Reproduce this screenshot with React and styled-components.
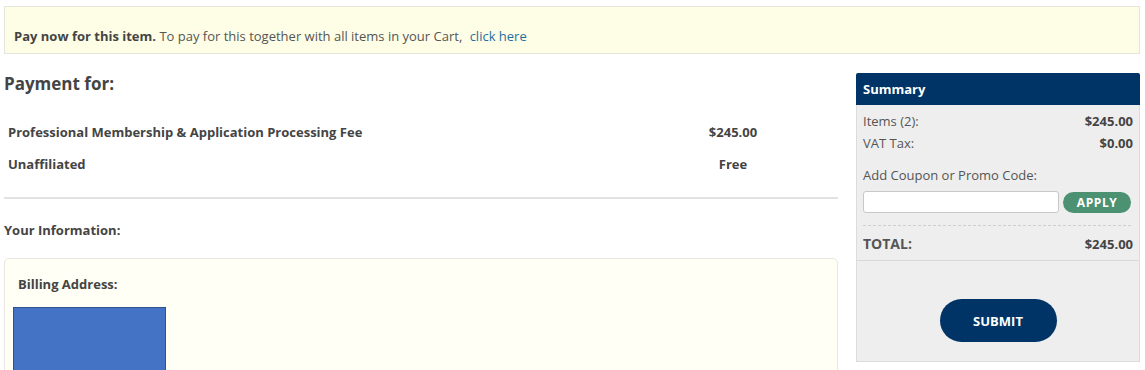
import React from "react";
import styled, { createGlobalStyle } from "styled-components";

const Global = createGlobalStyle`
  html, body { margin: 0; padding: 0; background: #fff; }
  body { font-family: "Open Sans", "Liberation Sans", sans-serif; color: #444; font-size: 13px; }
  * { box-sizing: border-box; }
`;

const Page = styled.div`
  padding: 6px 5px 0 4px;
`;

const Banner = styled.div`
  background: #fefee6;
  border: 1px solid #e6e6dc;
  padding: 19px 9px 7px 9px;
  line-height: 20px;
  font-size: 13px;
  color: #555;
`;

const Strong = styled.strong`
  color: #444;
  font-weight: 700;
`;

const Link = styled.a`
  color: #1f6fa3;
  text-decoration: none;
  margin-left: 4px;
`;

const Columns = styled.div`
  display: grid;
  grid-template-columns: 834px 284px;
  column-gap: 18px;
  align-items: start;
`;

const Main = styled.div`
  padding-top: 18px;
`;

const Heading = styled.h2`
  margin: 0;
  font-size: 17px;
  line-height: 24px;
  font-weight: 700;
  color: #444;
`;

const ItemList = styled.div`
  margin-top: 20px;
`;

const ItemRow = styled.div`
  display: grid;
  grid-template-columns: 1fr 170px;
  padding: 6px 20px 6px 4px;
  line-height: 20px;
  font-weight: 700;
  color: #444;
`;

const Price = styled.span`
  text-align: center;
`;

const Divider = styled.hr`
  margin: 17px 0 0 0;
  border: 0;
  border-top: 2px solid #e2e2e2;
`;

const SubHeading = styled.h3`
  margin: 21px 0 0 0;
  font-size: 13px;
  line-height: 20px;
  font-weight: 700;
  color: #444;
`;

const InfoBox = styled.div`
  margin-top: 18px;
  background: #fffff5;
  border: 1px solid #e8e8e0;
  border-radius: 5px;
  padding: 15px 8px 0 8px;
  height: 130px;
`;

const BoxTitle = styled.div`
  padding-left: 5px;
  font-weight: 700;
  line-height: 20px;
  color: #444;
`;

const AddressBlock = styled.div`
  margin-top: 13px;
  width: 153px;
  height: 100px;
  background: #4472c4;
  border: 1px solid #2f528f;
`;

const Summary = styled.aside`
  margin-top: 19px;
`;

const SummaryHeader = styled.div`
  background: #003466;
  color: #fff;
  font-weight: 700;
  font-size: 13px;
  line-height: 32px;
  padding: 0 7px;
  border-radius: 2px 2px 0 0;
`;

const SummaryBody = styled.div`
  background: #eeeeee;
  border: 1px solid #dcdcdc;
  border-top: 0;
`;

const SummaryTop = styled.div`
  padding: 5px 6px 5px 6px;
  border-bottom: 1px solid #d8d8d8;
`;

const Line = styled.div`
  display: flex;
  justify-content: space-between;
  align-items: baseline;
  line-height: 22px;
  font-size: ${(p) => (p.$total ? "14px" : "13px")};
  font-weight: ${(p) => (p.$total ? 700 : 400)};
  color: #555;
`;

const Value = styled.span`
  font-weight: 700;
  font-size: 13px;
  color: #444;
`;

const Label = styled.div`
  margin-top: 10px;
  line-height: 22px;
  color: #555;
`;

const CouponRow = styled.div`
  margin-top: 5px;
  display: flex;
  align-items: center;
  gap: 4px;
  padding-bottom: 12px;
  border-bottom: 1px dashed #cfcfcf;
  margin-right: 2px;
`;

const CouponInput = styled.input`
  width: 197px;
  height: 22px;
  border: 1px solid #c8c8c8;
  border-radius: 3px;
  background: #fff;
  outline: none;
`;

const ApplyButton = styled.button`
  width: 68px;
  height: 21px;
  border: 0;
  border-radius: 11px;
  background: #4b9172;
  color: #fff;
  font-family: inherit;
  font-weight: 700;
  font-size: 12px;
  letter-spacing: 0.6px;
  padding: 0;
  cursor: pointer;
`;

const TotalLine = styled(Line)`
  margin-top: 7px;
`;

const SubmitArea = styled.div`
  display: flex;
  justify-content: center;
  padding: 38px 0 19px 0;
`;

const SubmitButton = styled.button`
  width: 117px;
  height: 43px;
  border: 0;
  border-radius: 22px;
  background: #003466;
  color: #fff;
  font-family: inherit;
  font-weight: 700;
  font-size: 13px;
  cursor: pointer;
`;

export default function App() {
  return (
    <Page>
      <Global />
      <Banner>
        <Strong>Pay now for this item.</Strong> To pay for this together with all items in your Cart,
        <Link href="#"> click here</Link>
      </Banner>
      <Columns>
        <Main>
          <Heading>Payment for:</Heading>
          <ItemList>
            <ItemRow>
              <span>Professional Membership &amp; Application Processing Fee</span>
              <Price>$245.00</Price>
            </ItemRow>
            <ItemRow>
              <span>Unaffiliated</span>
              <Price>Free</Price>
            </ItemRow>
          </ItemList>
          <Divider />
          <SubHeading>Your Information:</SubHeading>
          <InfoBox>
            <BoxTitle>Billing Address:</BoxTitle>
            <AddressBlock />
          </InfoBox>
        </Main>
        <Summary>
          <SummaryHeader>Summary</SummaryHeader>
          <SummaryBody>
            <SummaryTop>
              <Line>
                <span>Items (2):</span>
                <Value>$245.00</Value>
              </Line>
              <Line>
                <span>VAT Tax:</span>
                <Value>$0.00</Value>
              </Line>
              <Label>Add Coupon or Promo Code:</Label>
              <CouponRow>
                <CouponInput type="text" />
                <ApplyButton>APPLY</ApplyButton>
              </CouponRow>
              <TotalLine $total>
                <span>TOTAL:</span>
                <Value>$245.00</Value>
              </TotalLine>
            </SummaryTop>
            <SubmitArea>
              <SubmitButton>SUBMIT</SubmitButton>
            </SubmitArea>
          </SummaryBody>
        </Summary>
      </Columns>
    </Page>
  );
}
